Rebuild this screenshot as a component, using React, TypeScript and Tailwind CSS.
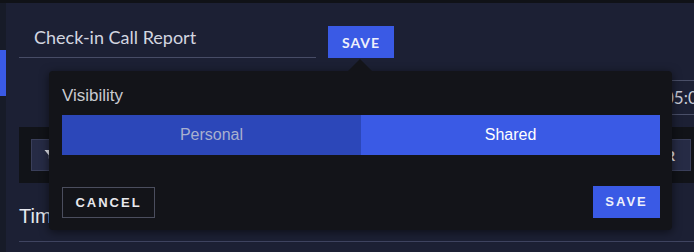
import React from 'react';

const lato = { fontFamily: 'Lato, "Liberation Sans", sans-serif' };
const arial = { fontFamily: '"Liberation Sans", Arial, sans-serif' };

const FunnelIcon: React.FC = () => (
  <svg width="12" height="12" viewBox="0 0 12 12" fill="#e8eaf2">
    <path d="M0.5 1h11L7.2 6.2V11L4.8 9.6V6.2z" />
  </svg>
);

const VisibilityPopover: React.FC = () => {
  const [mode, setMode] = React.useState<'personal' | 'shared'>('shared');

  return (
    <div
      className="absolute left-[49px] top-[71px] w-[623px] h-[159px] rounded-[4px] bg-[#131419] shadow-[0_2px_10px_rgba(0,0,0,0.55)] pt-[15px] pl-[13px] pr-[12px] pb-[12px] flex flex-col"
      style={arial}
    >
      {/* arrow */}
      <div className="absolute -top-[12px] left-[299px] w-0 h-0 border-l-[12px] border-r-[12px] border-b-[12px] border-l-transparent border-r-transparent border-b-[#131419]" />

      <div className="text-[17px] leading-[20px] text-[#c9cacf]">Visibility</div>

      <div className="mt-[9px] h-[40px] grid grid-cols-2">
        <button
          onClick={() => setMode('personal')}
          className={`text-[16px] ${mode === 'personal' ? 'bg-[#3a5ae5] text-white' : 'bg-[#2c47b9] text-[#a9b0cf]'}`}
        >
          Personal
        </button>
        <button
          onClick={() => setMode('shared')}
          className={`text-[16px] ${mode === 'shared' ? 'bg-[#3a5ae5] text-white' : 'bg-[#2c47b9] text-[#a9b0cf]'}`}
        >
          Shared
        </button>
      </div>

      <div className="mt-auto flex items-end justify-between">
        <button className="w-[93px] h-[31px] border border-[#4b4e5e] text-[13px] font-bold tracking-[2px] text-[#e8e8ec]">
          CANCEL
        </button>
        <button className="w-[67px] h-[32px] bg-[#3a5ae5] text-[13px] font-bold tracking-[2px] text-[#eef0fb]">
          SAVE
        </button>
      </div>
    </div>
  );
};

export default function App() {
  return (
    <div className="w-[694px] h-[252px] overflow-hidden bg-[#1c2034] flex flex-col relative">
      <div className="h-[3px] bg-[#101217] shrink-0" />
      <div className="flex flex-1">
        {/* side strip */}
        <div className="w-[6px] bg-[#171b28] shrink-0 pt-[47px]">
          <div className="h-[46px] bg-[#3a5ae5]" />
        </div>

        {/* main */}
        <div className="flex-1 pl-[13px] flex flex-col">
          <div className="mt-[23px] flex items-start gap-[12px]">
            <div className="w-[297px] h-[32px] border-b border-[#474c66] pl-[15px]">
              <div className="text-[18px] leading-[22px] text-[#d3d6e0]" style={lato}>
                Check-in Call Report
              </div>
            </div>
            <button
              className="w-[66px] h-[32px] bg-[#3a5ae5] text-[14px] font-bold tracking-[1px] text-[#eef0fb]"
              style={lato}
            >
              SAVE
            </button>
          </div>

          <div className="mt-[22px] flex justify-end">
            <div
              className="w-[39px] h-[35px] border-y border-[#4a4f68] pl-[9px] flex items-center overflow-hidden whitespace-nowrap text-[17px] text-[#c7cad6]"
              style={lato}
            >
              05:00 PM
            </div>
          </div>

          <div className="mt-[12px] h-[56px] bg-[#111318] pl-[12px] pr-[3px] flex items-center justify-between">
            <button
              className="h-[32px] w-[96px] bg-[#262b45] border border-[#3a3f5a] pl-[12px] flex items-center gap-2 text-[13px] font-bold text-[#e8eaf2]"
              style={lato}
            >
              <FunnelIcon />
              FILTER
            </button>
            <button
              className="h-[32px] w-[80px] bg-[#262b45] border border-[#3a3f5a] pr-[15px] flex items-center justify-end text-[14px] font-bold text-[#e8eaf2]"
              style={lato}
            >
              CLEAR
            </button>
          </div>

          <div
            className="mt-[21px] pb-[13px] border-b border-[#3f4460] text-[20px] leading-[24px] text-[#e6e8ef]"
            style={arial}
          >
            Timeline
          </div>
        </div>
      </div>

      <VisibilityPopover />
    </div>
  );
}
